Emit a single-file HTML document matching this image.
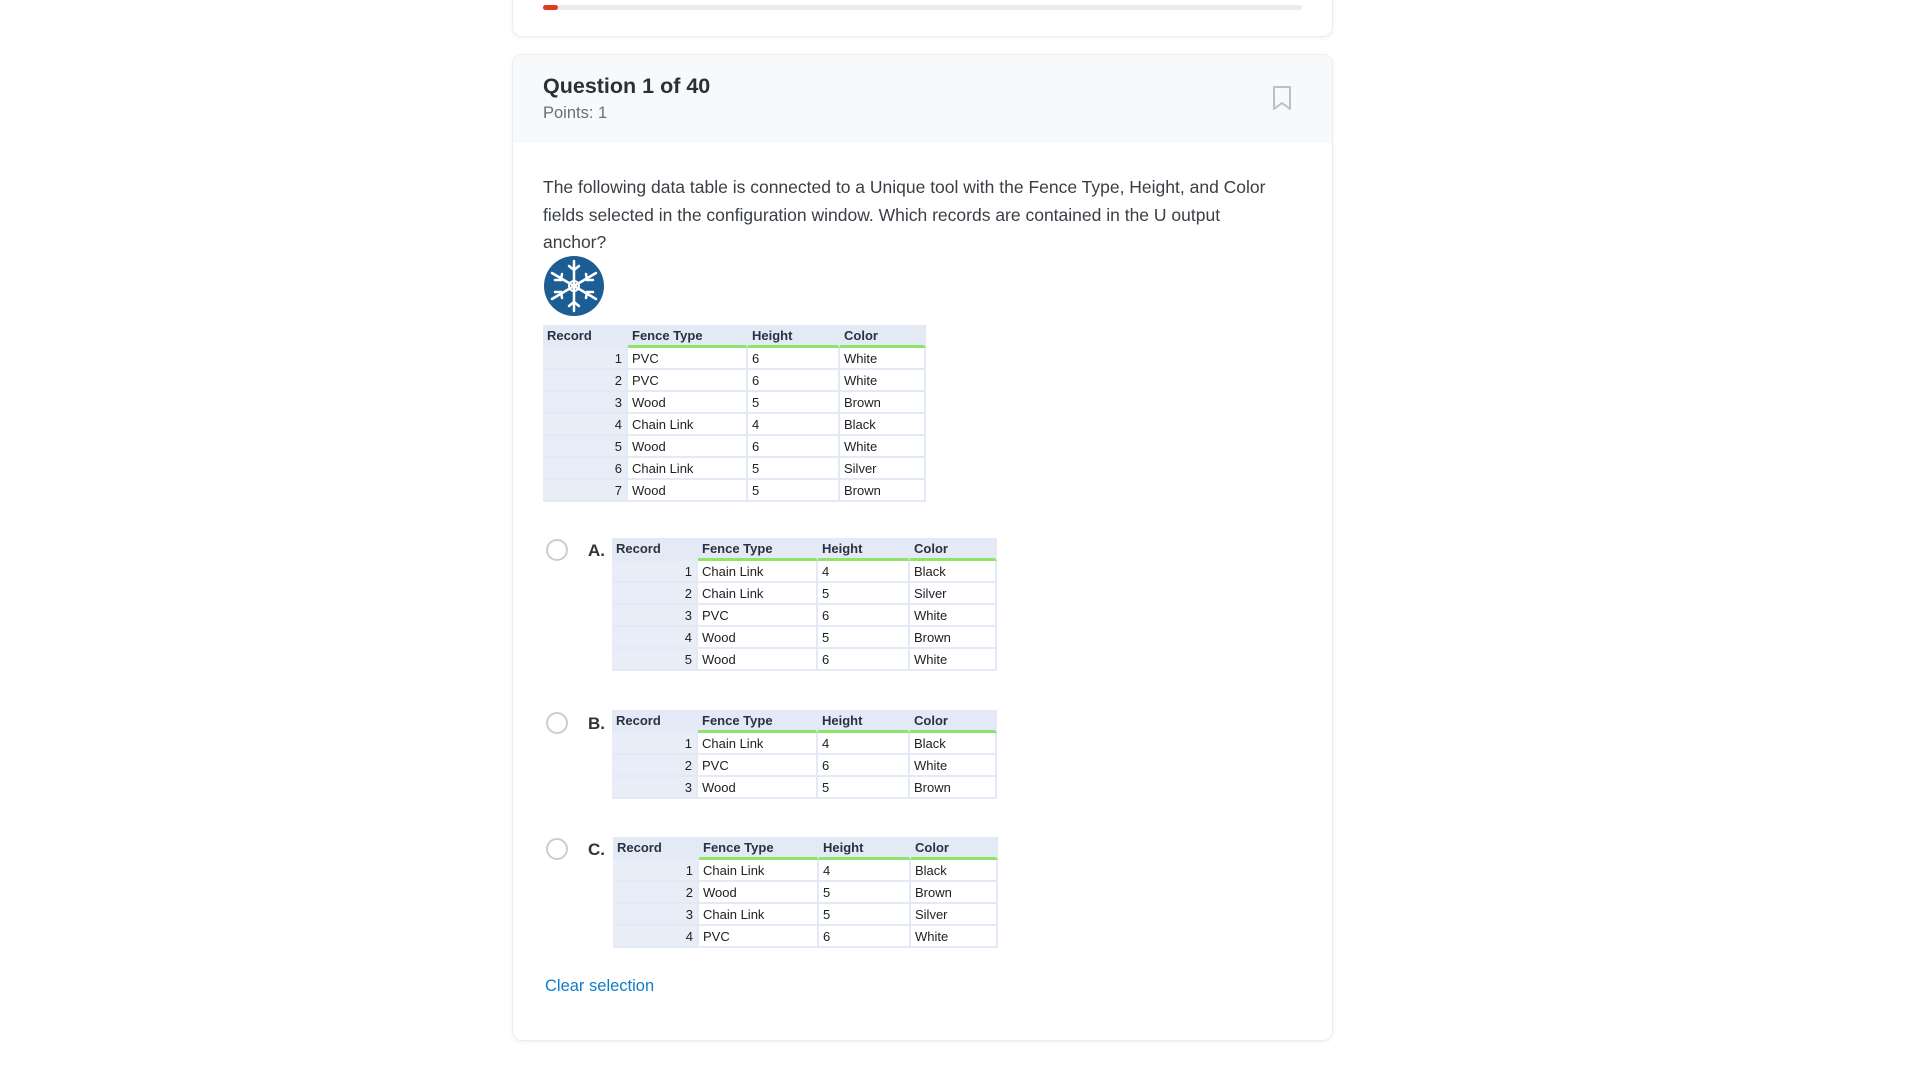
<!DOCTYPE html>
<html><head><meta charset="utf-8"><style>
body{margin:0;background:#fff;font-family:"Liberation Sans",sans-serif;width:1920px;height:1080px;position:relative;overflow:hidden}
.card{position:absolute;left:512px;width:821px;background:#fff;border:1px solid #eceef1;border-radius:10px;box-shadow:0 1px 4px rgba(0,0,0,.06);box-sizing:border-box}
.abs{position:absolute}
table{border-collapse:separate;border-spacing:0;font-size:13px;color:#222;background:#e4eaf5}
td,th{height:20px;padding:0 4px;border-right:2px solid #e4eaf5;border-bottom:2px solid #e4eaf5;text-align:left;white-space:nowrap}
th{font-weight:bold;color:#2a3140;height:20px;border-bottom:3px solid #8ee36a}
th.r{border-bottom:3px solid #e4eaf5}
td{background:#fff}
td.n{background:#e8edf7;text-align:right}
.radio{position:absolute;width:22px;height:22px;border:2px solid #c9ced6;border-radius:50%;box-sizing:border-box}
.lt{position:absolute;font-size:17px;font-weight:bold;color:#333}
</style></head><body>
<div class="card" style="top:-10px;height:47px">
 <div class="abs" style="left:30px;top:14px;width:759px;height:5px;background:#e9ebee;border-radius:3px"></div>
 <div class="abs" style="left:30px;top:14px;width:15px;height:5px;background:#e23a1e;border-radius:3px"></div>
</div>
<div class="card" style="top:54px;height:987px;overflow:hidden">
 <div class="abs" style="left:0;top:0;width:821px;height:88px;background:#f8f9fa"></div>
 <div class="abs" style="left:30px;top:19px;font-size:21.5px;font-weight:bold;color:#2b2f36">Question 1 of 40</div>
 <div class="abs" style="left:30px;top:49px;font-size:16.5px;color:#6a6f76">Points: 1</div>
 <svg class="abs" style="left:758px;top:30px" width="22" height="26" viewBox="0 0 22 26"><path d="M3 2h16v22l-8-6-8 6z" fill="none" stroke="#b8c0c9" stroke-width="2" stroke-linejoin="round"/></svg>
 <div class="abs" style="left:30px;top:119px;width:735px;font-size:17.5px;line-height:27.5px;color:#3a3f45">The following data table is connected to a Unique tool with the Fence Type, Height, and Color fields selected in the configuration window. Which records are contained in the U output anchor?</div>
 <svg class="abs" style="left:30px;top:200px" width="62" height="62" viewBox="0 0 62 62"><circle cx="31" cy="31" r="30" fill="#1c5d94"/><g stroke="#fff" stroke-width="2.5" stroke-linecap="round"><line x1="31" y1="6" x2="31" y2="56"/><line x1="9" y1="18" x2="53" y2="44"/><line x1="9" y1="44" x2="53" y2="18"/><path d="M26 11l5 4 5-4M26 51l5-4 5 4M12 25l6 0 1-6M50 37l-6 0-1 6M12 37l6 0 1 6M50 25l-6 0-1-6" fill="none"/></g><circle cx="31" cy="31" r="5" fill="none" stroke="#fff" stroke-width="2"/></svg>
</div>
<div class="abs" style="left:543px;top:325px">
<table><tr><th class="r" style="width:75px">Record</th><th style="width:110px">Fence Type</th><th style="width:82px">Height</th><th style="width:76px">Color</th></tr>
<tr><td class="n">1</td><td>PVC</td><td>6</td><td>White</td></tr>
<tr><td class="n">2</td><td>PVC</td><td>6</td><td>White</td></tr>
<tr><td class="n">3</td><td>Wood</td><td>5</td><td>Brown</td></tr>
<tr><td class="n">4</td><td>Chain Link</td><td>4</td><td>Black</td></tr>
<tr><td class="n">5</td><td>Wood</td><td>6</td><td>White</td></tr>
<tr><td class="n">6</td><td>Chain Link</td><td>5</td><td>Silver</td></tr>
<tr><td class="n">7</td><td>Wood</td><td>5</td><td>Brown</td></tr></table></div>

<div class="radio" style="left:546px;top:539px"></div><div class="lt" style="left:588px;top:541px">A.</div>
<div class="abs" style="left:612px;top:538px">
<table><tr><th class="r" style="width:76px">Record</th><th style="width:110px">Fence Type</th><th style="width:82px">Height</th><th style="width:77px">Color</th></tr>
<tr><td class="n">1</td><td>Chain Link</td><td>4</td><td>Black</td></tr>
<tr><td class="n">2</td><td>Chain Link</td><td>5</td><td>Silver</td></tr>
<tr><td class="n">3</td><td>PVC</td><td>6</td><td>White</td></tr>
<tr><td class="n">4</td><td>Wood</td><td>5</td><td>Brown</td></tr>
<tr><td class="n">5</td><td>Wood</td><td>6</td><td>White</td></tr></table></div>

<div class="radio" style="left:546px;top:712px"></div><div class="lt" style="left:588px;top:714px">B.</div>
<div class="abs" style="left:612px;top:710px">
<table><tr><th class="r" style="width:76px">Record</th><th style="width:110px">Fence Type</th><th style="width:82px">Height</th><th style="width:77px">Color</th></tr>
<tr><td class="n">1</td><td>Chain Link</td><td>4</td><td>Black</td></tr>
<tr><td class="n">2</td><td>PVC</td><td>6</td><td>White</td></tr>
<tr><td class="n">3</td><td>Wood</td><td>5</td><td>Brown</td></tr></table></div>

<div class="radio" style="left:546px;top:838px"></div><div class="lt" style="left:588px;top:840px">C.</div>
<div class="abs" style="left:613px;top:837px">
<table><tr><th class="r" style="width:76px">Record</th><th style="width:110px">Fence Type</th><th style="width:82px">Height</th><th style="width:77px">Color</th></tr>
<tr><td class="n">1</td><td>Chain Link</td><td>4</td><td>Black</td></tr>
<tr><td class="n">2</td><td>Wood</td><td>5</td><td>Brown</td></tr>
<tr><td class="n">3</td><td>Chain Link</td><td>5</td><td>Silver</td></tr>
<tr><td class="n">4</td><td>PVC</td><td>6</td><td>White</td></tr></table></div>

<div class="abs" style="left:545px;top:977px;font-size:16.5px;color:#0f7ec5">Clear selection</div>
</body></html>
